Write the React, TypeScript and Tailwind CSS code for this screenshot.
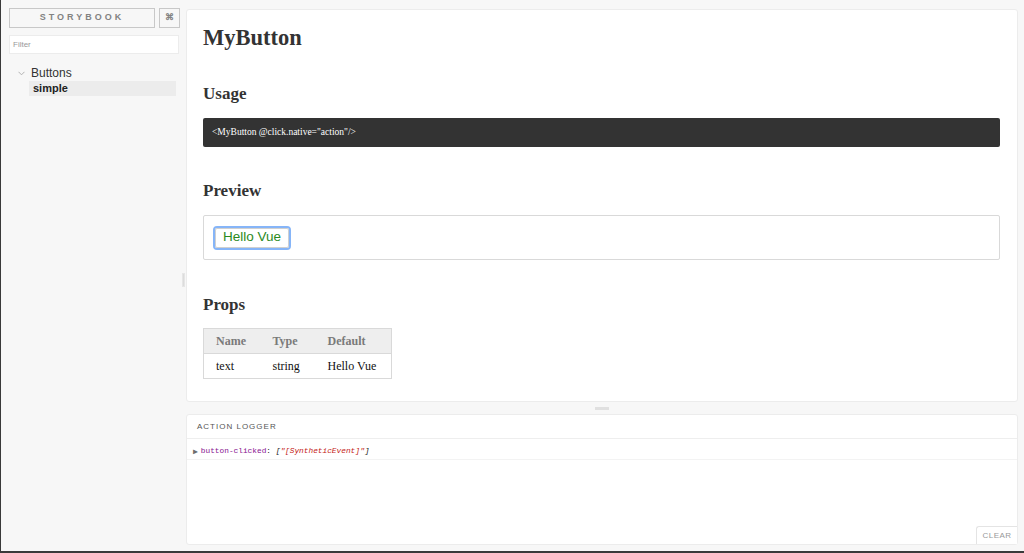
import React from "react";

const serif = { fontFamily: '"Liberation Serif", "Times New Roman", serif' };

export default function App() {
  return (
    <div
      className="w-[1024px] h-[553px] flex bg-[#f7f7f7] overflow-hidden border-l border-b-2 border-[#3a3a3a]"
      style={{ fontFamily: '"Liberation Sans", Arial, sans-serif' }}
    >
      {/* Sidebar */}
      <div className="w-[179px] shrink-0 flex flex-col pl-[8px] pt-[8px]">
        <div className="flex gap-[4px]">
          <div className="w-[146px] h-[20px] border border-[#c8c8c8] bg-[#f7f7f7] flex items-center justify-center text-[9px] font-bold tracking-[3px] text-[#828282]">
            STORYBOOK
          </div>
          <div className="w-[21px] h-[20px] border border-[#c8c8c8] flex items-center justify-center text-[9px] font-bold text-[#828282]">
            ⌘
          </div>
        </div>
        <div className="mt-[7px] h-[19px] w-[170px] bg-white border border-[#ececec] flex items-center pl-[3px] text-[8px] text-[#999]">
          Filter
        </div>
        <div className="mt-[12px] pl-[9px] flex items-center gap-[6px] text-[12px] text-[#333] leading-[14px]">
          <svg width="7" height="5" viewBox="0 0 7 5" className="mt-[1px]">
            <path d="M0.5 0.8 L3.5 3.8 L6.5 0.8" fill="none" stroke="#aaa" strokeWidth="0.9" />
          </svg>
          <span>Buttons</span>
        </div>
        <div className="mt-[1px] ml-[20px] w-[147px] h-[15px] bg-[#ececec] flex items-center pl-[4px] text-[11px] font-bold text-[#222]">
          simple
        </div>
      </div>
      {/* splitter */}
      <div className="w-[6px] shrink-0 flex items-start pt-[273px] pl-[2px]">
        <div className="w-[3px] h-[14px] bg-[#dcdcdc] border border-[#e6e6e6]" />
      </div>

      {/* Main */}
      <div className="flex-1 flex flex-col pt-[9px] pr-[6px] pb-[6px]">
        <div className="h-[393px] bg-white rounded-[3px] border border-[#ececec] pl-[16px] pr-[17px] pt-[14px] text-[#333]" style={serif}>
          <h1 className="text-[22.5px] font-bold leading-[28px]">MyButton</h1>
          <h2 className="mt-[32px] text-[17px] font-bold leading-[20px]">Usage</h2>
          <div className="mt-[14px] h-[29px] bg-[#333] rounded-[2px] flex items-center pl-[9px] text-[9.5px] text-white">
            &lt;MyButton @click.native="action"/&gt;
          </div>
          <h2 className="mt-[34px] text-[17px] font-bold leading-[20px]">Preview</h2>
          <div className="mt-[14px] h-[45px] border border-[#d9d9d9] rounded-[2px] flex items-center pl-[9px]">
            <div className="h-[24px] w-[78px] rounded-[4px] border-[2px] border-[#86b5f8] flex">
              <div
                className="flex-1 bg-white border border-[#d0d0d0] rounded-[2px] flex items-center justify-center text-[13.5px] text-[#2a8a1e]"
                style={{ fontFamily: '"Liberation Sans", Arial, sans-serif' }}
              >
                Hello Vue
              </div>
            </div>
          </div>
          <h2 className="mt-[35px] text-[17px] font-bold leading-[20px]">Props</h2>
          <table className="mt-[13px] border border-[#d9d9d9] border-collapse text-[12px] table-fixed w-[188px]">
            <thead>
              <tr className="bg-[#eeeeee] h-[25px]">
                <th className="text-left font-bold text-[#7a7a7a] pl-[12px] w-[57px]">Name</th>
                <th className="text-left font-bold text-[#7a7a7a] pl-[12px] w-[55px]">Type</th>
                <th className="text-left font-bold text-[#7a7a7a] pl-[12px] w-[76px]">Default</th>
              </tr>
            </thead>
            <tbody>
              <tr className="h-[25px] border-t border-[#d9d9d9] text-[#111]">
                <td className="pl-[12px]">text</td>
                <td className="pl-[12px]">string</td>
                <td className="pl-[12px]">Hello Vue</td>
              </tr>
            </tbody>
          </table>
        </div>

        <div className="h-[12px] flex items-center justify-center">
          <div className="w-[14px] h-[3px] bg-[#e0e0e0]" />
        </div>

        <div className="flex-1 bg-white rounded-[3px] border border-[#ececec] flex flex-col relative">
          <div className="h-[24px] border-b border-[#eeeeee] flex items-center pl-[10px] text-[8px] tracking-[1px] text-[#555]">
            ACTION LOGGER
          </div>
          <div
            className="h-[21px] border-b border-[#f3f3f3] flex items-center pl-[6px] pt-[5px] text-[7.8px]"
            style={{ fontFamily: '"Liberation Mono", "DejaVu Sans Mono", monospace' }}
          >
            <span className="text-[#6e6e6e] text-[8px] mr-[3px]">▶</span>
            <span className="text-[#881391]">button-clicked</span>
            <span className="text-[#222]">:&nbsp;</span>
            <span className="italic text-[#222]">[</span>
            <span className="italic text-[#c41a16]">"[SyntheticEvent]"</span>
            <span className="italic text-[#222]">]</span>
          </div>
          <div className="absolute right-0 bottom-0 w-[41px] h-[18px] border-t border-l border-[#e4e4e4] rounded-tl-[3px] bg-white flex items-center justify-center text-[8px] tracking-[0.5px] text-[#999]">
            CLEAR
          </div>
        </div>
      </div>
    </div>
  );
}
